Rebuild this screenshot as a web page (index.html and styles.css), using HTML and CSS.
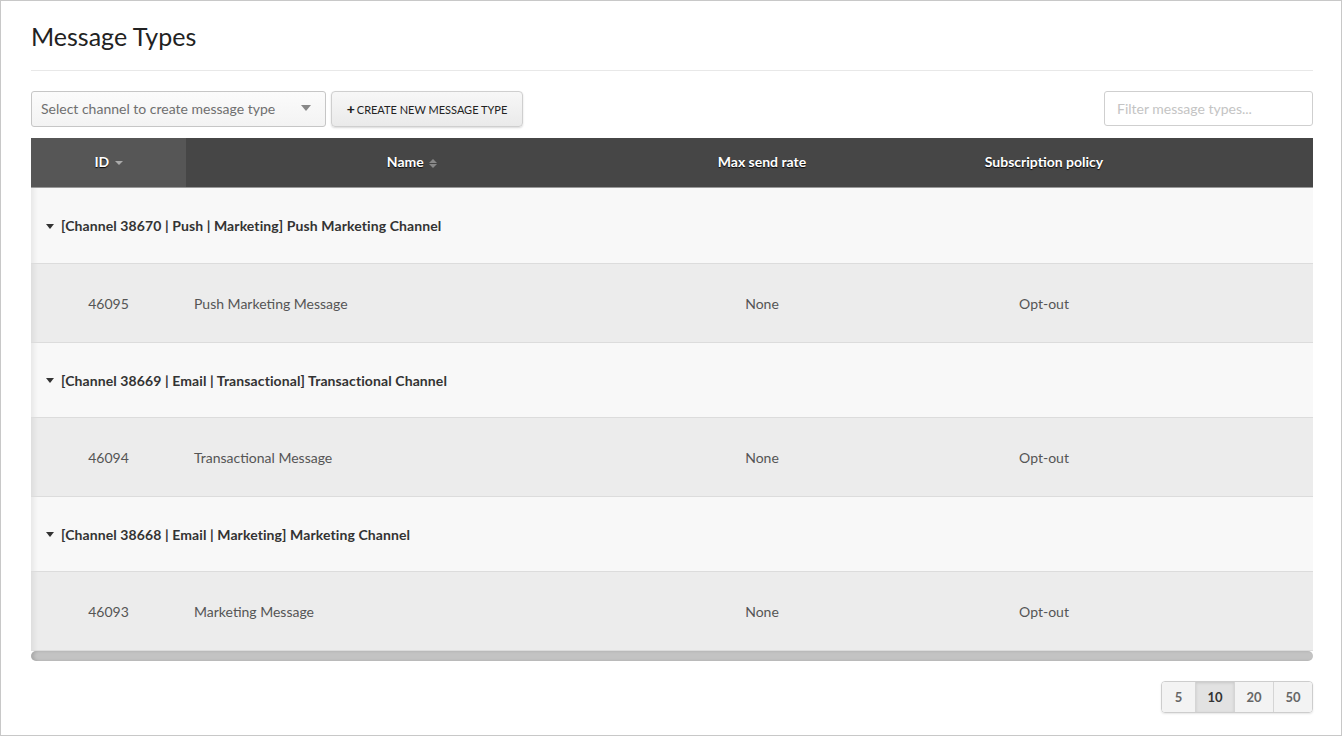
FILE: index.html
```html
<!DOCTYPE html>
<html>
<head>
    <title>Message Types</title>
    <link rel="stylesheet" href="styles.css">
</head>
<body>
    <div class="page">
        <h1 class="title">Message Types</h1>

        <!-- Toolbar -->
        <div class="toolbar">
            <div class="select">
                <span>Select channel to create message type</span>
                <span class="caret"></span>
            </div>
            <button class="create-btn" type="button"><span class="plus">+</span>CREATE NEW MESSAGE TYPE</button>
            <input class="filter" type="text" placeholder="Filter message types...">
        </div>

        <!-- Table -->
        <div class="table-wrap">
            <table class="grid">
                <colgroup>
                    <col style="width:155px">
                    <col style="width:452px">
                    <col style="width:248px">
                    <col style="width:316px">
                    <col>
                </colgroup>
                <thead>
                    <tr>
                        <th class="sorted">ID <span class="sort-down"></span></th>
                        <th>Name <span class="sort-both"><i class="up"></i><i class="down"></i></span></th>
                        <th>Max send rate</th>
                        <th>Subscription policy</th>
                        <th></th>
                    </tr>
                </thead>
                <tbody>
                    <tr class="group">
                        <td colspan="5"><span class="tri"></span>[Channel 38670 | Push | Marketing] Push Marketing Channel</td>
                    </tr>
                    <tr class="item">
                        <td class="id">46095</td>
                        <td>Push Marketing Message</td>
                        <td class="center">None</td>
                        <td class="center">Opt-out</td>
                        <td></td>
                    </tr>
                    <tr class="group">
                        <td colspan="5"><span class="tri"></span>[Channel 38669 | Email | Transactional] Transactional Channel</td>
                    </tr>
                    <tr class="item">
                        <td class="id">46094</td>
                        <td>Transactional Message</td>
                        <td class="center">None</td>
                        <td class="center">Opt-out</td>
                        <td></td>
                    </tr>
                    <tr class="group">
                        <td colspan="5"><span class="tri"></span>[Channel 38668 | Email | Marketing] Marketing Channel</td>
                    </tr>
                    <tr class="item">
                        <td class="id">46093</td>
                        <td>Marketing Message</td>
                        <td class="center">None</td>
                        <td class="center">Opt-out</td>
                        <td></td>
                    </tr>
                </tbody>
            </table>
            <div class="scrollbar"></div>
        </div>

        <!-- Page size -->
        <div class="pager">
            <div class="sizes">
                <span class="size">5</span>
                <span class="size active">10</span>
                <span class="size">20</span>
                <span class="size">50</span>
            </div>
        </div>
    </div>
</body>
</html>
```

FILE: styles.css
```css
html, body {
    margin: 0;
    padding: 0;
}

body {
    font-family: "Lato", "Open Sans", sans-serif;
    color: #333;
    background: #fff;
}

.page {
    box-sizing: border-box;
    height: 736px;
    border: 1px solid #c8c8c8;
    padding: 0 28px 0 30px;
}

.title {
    margin: 0;
    padding-top: 20px;
    padding-bottom: 19px;
    font-size: 25px;
    line-height: 30px;
    font-weight: 400;
    color: #222;
    border-bottom: 1px solid #e8e8e8;
}

/* Toolbar */
.toolbar {
    display: flex;
    align-items: flex-start;
    margin-top: 20px;
    height: 36px;
}

.select {
    box-sizing: border-box;
    width: 295px;
    height: 36px;
    display: flex;
    align-items: center;
    justify-content: space-between;
    padding: 0 14px 2px 9px;
    border: 1px solid #c6c6c6;
    border-radius: 3px;
    background: linear-gradient(to bottom, #fbfbfb, #f3f3f3);
    font-size: 14px;
    color: #6f6f6f;
}

.caret {
    width: 0;
    height: 0;
    border-left: 5px solid transparent;
    border-right: 5px solid transparent;
    border-top: 6px solid #888;
}

.create-btn {
    box-sizing: border-box;
    margin-left: 5px;
    height: 36px;
    width: 192px;
    padding: 0 0 2px;
    border: 1px solid #cfcfcf;
    border-radius: 4px;
    background: linear-gradient(to bottom, #f7f7f7, #eaeaea);
    box-shadow: 0 1px 2px rgba(0, 0, 0, 0.15);
    font-family: "Lato", sans-serif;
    font-size: 11px;
    color: #222;
}

.plus {
    font-weight: 900;
    font-size: 14px;
    margin-right: 2px;
}

.filter {
    box-sizing: border-box;
    margin-left: auto;
    width: 209px;
    height: 35px;
    padding: 0 12px;
    border: 1px solid #cfcfcf;
    border-radius: 3px;
    font-family: "Lato", sans-serif;
    font-size: 14px;
    outline: none;
}

.filter::placeholder {
    color: #c4c4c4;
}

/* Table */
.table-wrap {
    margin-top: 11px;
}

.grid {
    width: 100%;
    table-layout: fixed;
    border-collapse: collapse;
}

.grid th {
    height: 47px;
    padding: 0 0 3px;
    background: #464646;
    color: #fff;
    font-size: 14px;
    font-weight: 700;
    text-shadow: 0 1px 1px rgba(0, 0, 0, 0.9);
    text-align: center;
    box-shadow: inset 0 -1px 0 #999;
}

.grid th.sorted {
    background: #565656;
}

.sort-down {
    display: inline-block;
    vertical-align: middle;
    margin-left: 2px;
    border-left: 4px solid transparent;
    border-right: 4px solid transparent;
    border-top: 4px solid #aaa;
}

.sort-both {
    display: inline-flex;
    flex-direction: column;
    vertical-align: middle;
    gap: 1px;
    margin-left: 2px;
}

.sort-both i {
    display: block;
    border-left: 4px solid transparent;
    border-right: 4px solid transparent;
}

.sort-both .up {
    border-bottom: 4px solid #888;
}

.sort-both .down {
    border-top: 4px solid #888;
}

.grid td {
    padding: 0 8px;
    font-size: 14px;
    border-bottom: 1px solid #dcdcdc;
}

.grid td:first-child {
    background-image: linear-gradient(to right, rgba(0, 0, 0, 0.06), rgba(0, 0, 0, 0) 7px);
}

.group td {
    height: 74px;
    background-color: #f8f8f8;
    font-weight: 700;
    color: #333;
    padding-left: 15px;
    letter-spacing: 0.1px;
}

.group:first-child td {
    height: 75px;
}

.tri {
    display: inline-block;
    vertical-align: middle;
    margin-right: 7px;
    margin-top: -2px;
    border-left: 4px solid transparent;
    border-right: 4px solid transparent;
    border-top: 5px solid #333;
}

.item td {
    height: 78px;
    background-color: #ececec;
    color: #555;
}

.item td.id {
    text-align: center;
}

.item td.center {
    text-align: center;
}

.scrollbar {
    height: 10px;
    background: #c3c3c3;
    border-radius: 5px;
    box-shadow: inset 3px 0 3px rgba(0, 0, 0, 0.12);
}

/* Page sizes */
.pager {
    display: flex;
    justify-content: flex-end;
    margin-top: 20px;
}

.sizes {
    display: flex;
    border: 1px solid #cdcdcd;
    border-radius: 4px;
    overflow: hidden;
    box-shadow: 0 1px 2px rgba(0, 0, 0, 0.1);
}

.size {
    box-sizing: border-box;
    height: 30px;
    line-height: 30px;
    text-align: center;
    font-size: 13px;
    font-weight: 700;
    color: #666;
    background: #f3f3f3;
    border-left: 1px solid #d5d5d5;
    width: 39px;
}

.size:first-child {
    border-left: none;
    width: 33px;
}

.size.active {
    background: #e2e2e2;
    color: #333;
    box-shadow: inset 0 1px 3px rgba(0, 0, 0, 0.12);
}
```
